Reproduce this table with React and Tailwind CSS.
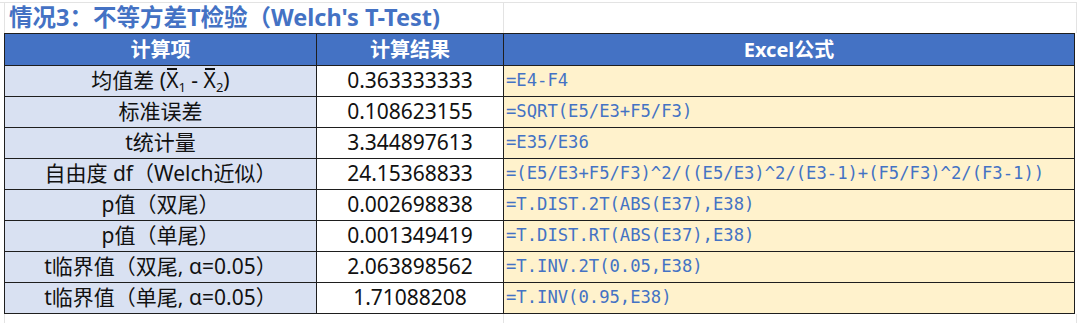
import React from 'react';

// Welch's T-Test summary sheet (Excel style)
const Xbar = ({ sub }) => (
  <>
    <span className="relative inline-block">
      X<span className="absolute left-[1px] right-[1px] top-[3px] h-[1.5px] bg-[#111]" />
    </span>
    <span className="text-[13px] relative top-[4px]">{sub}</span>
  </>
);

const rows = [
  {
    label: (
      <span>
        均值差 (<Xbar sub="1" /> - <Xbar sub="2" />)
      </span>
    ),
    value: '0.363333333',
    formula: '=E4-F4',
  },
  { label: '标准误差', value: '0.108623155', formula: '=SQRT(E5/E3+F5/F3)' },
  { label: 't统计量', value: '3.344897613', formula: '=E35/E36' },
  {
    label: '自由度 df（Welch近似）',
    value: '24.15368833',
    formula: '=(E5/E3+F5/F3)^2/((E5/E3)^2/(E3-1)+(F5/F3)^2/(F3-1))',
  },
  { label: 'p值（双尾）', value: '0.002698838', formula: '=T.DIST.2T(ABS(E37),E38)' },
  { label: 'p值（单尾）', value: '0.001349419', formula: '=T.DIST.RT(ABS(E37),E38)' },
  { label: 't临界值（双尾, α=0.05）', value: '2.063898562', formula: '=T.INV.2T(0.05,E38)' },
  { label: 't临界值（单尾, α=0.05）', value: '1.71088208', formula: '=T.INV(0.95,E38)' },
];

const sans = "font-['Noto_Sans','Noto_Sans_CJK_SC',sans-serif]";

const App = () => {
  return (
    <div className={`w-[1080px] h-[323px] bg-white overflow-hidden ${sans}`}>
      {/* title row with faint sheet gridlines */}
      <div className="flex h-[33px] pt-[2px]">
        <div className="w-[4px] border-t border-[#e3e3e3]" />
        <div className="w-[499px] border-t border-l border-[#e3e3e3] flex items-center pl-[4px]">
          <span className="text-[23.5px] font-bold text-[#4472c4] leading-none whitespace-nowrap">
            情况3：不等方差T检验（Welch's T-Test)
          </span>
        </div>
        <div className="w-[574px] border-t border-l border-r border-[#e3e3e3]" />
      </div>

      {/* table */}
      <div className="ml-[4px] w-[1071px] grid grid-cols-[311px_186px_570px] gap-px p-px bg-[#1e1e1e]">
        <div className="h-[31px] bg-[#4472c4] text-white font-bold text-[20px] flex items-center justify-center">
          计算项
        </div>
        <div className="h-[31px] bg-[#4472c4] text-white font-bold text-[20px] flex items-center justify-center">
          计算结果
        </div>
        <div className="h-[31px] bg-[#4472c4] text-white font-bold text-[20px] flex items-center justify-center">
          Excel公式
        </div>

        {rows.map((r, i) => (
          <React.Fragment key={i}>
            <div className="h-[30px] bg-[#d9e1f2] text-[#111] text-[21px] flex items-center justify-center whitespace-nowrap">
              {r.label}
            </div>
            <div className="h-[30px] bg-white text-[#111] text-[21px] flex items-center justify-center">
              {r.value}
            </div>
            <div className="h-[30px] bg-[#fff2cc] text-[#4472c4] text-[17.2px] flex items-center pl-[2px] whitespace-nowrap font-['DejaVu_Sans_Mono','Liberation_Mono',monospace]">
              {r.formula}
            </div>
          </React.Fragment>
        ))}
      </div>

      {/* faint gridlines below the table */}
      <div className="flex h-[10px]">
        <div className="w-[4px]" />
        <div className="w-[499px] border-l border-[#e3e3e3]" />
        <div className="w-[574px] border-l border-r border-[#e3e3e3]" />
      </div>
    </div>
  );
};

export default App;
